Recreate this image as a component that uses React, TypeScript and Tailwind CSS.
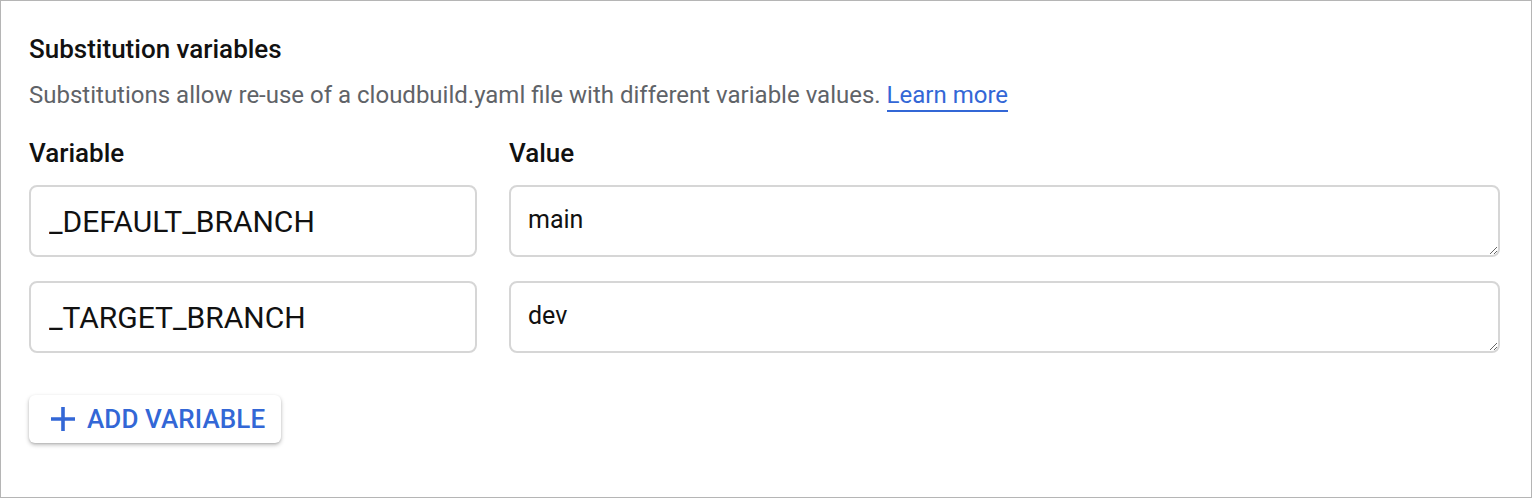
import React from "react";

export default function App() {
  return (
    <div
      className="w-[1532px] h-[498px] bg-white border border-[#b5b5b5] box-border overflow-hidden"
      style={{ fontFamily: "Roboto, 'Liberation Sans', sans-serif" }}
    >
      <div className="pl-[28px] pr-[31px] pt-[33px]">
        <h2 className="text-[26px] leading-[30px] font-medium text-[#111111]">Substitution variables</h2>
        <p className="mt-[16px] text-[24px] leading-[30px] text-[#5f6368]">
          Substitutions allow re-use of a cloudbuild.yaml file with different variable values.{" "}
          <a className="text-[#3367d6] border-b-2 border-[#3367d6] pb-[1px]">Learn more</a>
        </p>
        <div className="mt-[28px] grid grid-cols-[448px_1fr] gap-x-[32px]">
          <div className="text-[26px] leading-[30px] font-medium text-[#111111]">Variable</div>
          <div className="text-[26px] leading-[30px] font-medium text-[#111111]">Value</div>
        </div>
        <div className="mt-[17px] flex flex-col gap-[24px]">
          {[
            ["_DEFAULT_BRANCH", "main"],
            ["_TARGET_BRANCH", "dev"],
          ].map(([k, v]) => (
            <div key={k} className="grid grid-cols-[448px_1fr] gap-x-[32px]">
              <input
                readOnly
                value={k}
                className="h-[72px] rounded-[8px] border-2 border-[#d6d6d6] pl-[18px] pr-[18px] text-[30px] text-[#111111] outline-none"
                style={{ fontFamily: "Roboto, 'Liberation Sans', sans-serif" }}
              />
              <textarea
                readOnly
                value={v}
                className="h-[72px] rounded-[8px] border-2 border-[#d6d6d6] px-[17px] pt-[18px] text-[25px] leading-[30px] text-[#111111] outline-none"
                style={{ fontFamily: "Roboto, 'Liberation Sans', sans-serif" }}
              />
            </div>
          ))}
        </div>
        <button className="mt-[42px] h-[48px] w-[252px] rounded-[6px] bg-white flex items-center pl-[21px] gap-[11px] shadow-[0_2px_4px_rgba(0,0,0,0.25),0_1px_2px_rgba(0,0,0,0.1)]">
          <svg width="26" height="26" viewBox="0 0 26 26" className="text-[#3367d6]">
            <path d="M13 1v24M1 13h24" stroke="currentColor" strokeWidth="3.6" fill="none" />
          </svg>
          <span className="text-[26px] font-medium tracking-[0.1px] text-[#3367d6]">ADD VARIABLE</span>
        </button>
      </div>
    </div>
  );
}
